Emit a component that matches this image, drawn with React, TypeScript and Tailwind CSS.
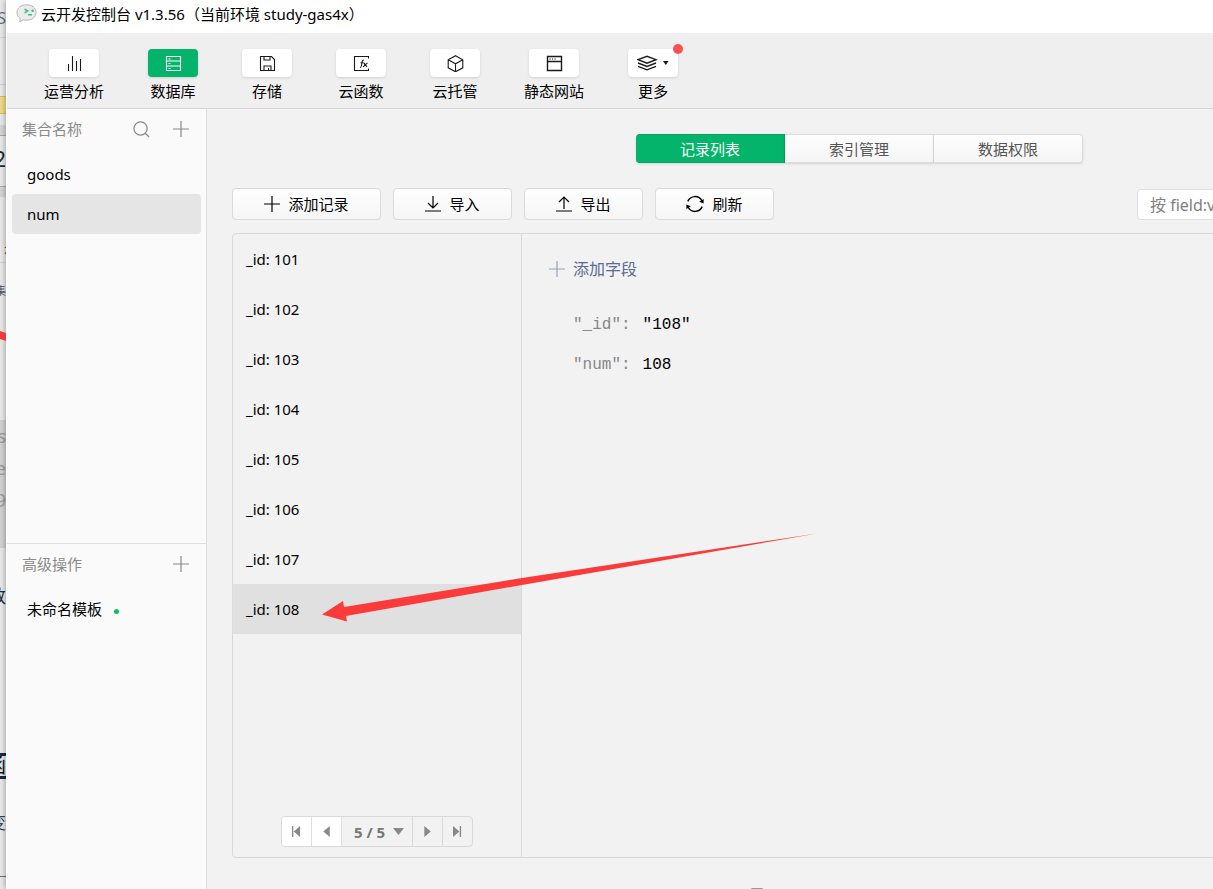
import { useState } from 'react';
import type { ReactNode } from 'react';

const PlusIcon = ({ className = '' }: { className?: string }) => (
    <svg className={className} width="16" height="16" viewBox="0 0 16 16" stroke="currentColor" strokeWidth="1.2" fill="none" aria-hidden="true">
        <path d="M8 0v16M0 8h16" />
    </svg>
);

const SearchIcon = () => (
    <svg width="17" height="17" viewBox="0 0 18 18" stroke="currentColor" strokeWidth="1.3" fill="none" aria-hidden="true">
        <circle cx="8" cy="8" r="7" />
        <path d="M13 13l4 4" />
    </svg>
);

const ImportIcon = () => (
    <svg width="16" height="16" viewBox="0 0 16 16" stroke="currentColor" strokeWidth="1.2" fill="none" aria-hidden="true">
        <path d="M8 0v12M3 7l5 5 5-5M0 15h16" />
    </svg>
);

const ExportIcon = () => (
    <svg width="16" height="16" viewBox="0 0 16 16" stroke="currentColor" strokeWidth="1.2" fill="none" aria-hidden="true">
        <path d="M8 13V1M3 6l5-5 5 5M0 15h16" />
    </svg>
);

const RefreshIcon = () => (
    <svg width="18" height="20" viewBox="1 0 18 20" stroke="currentColor" strokeWidth="1.5" fill="none" aria-hidden="true">
        <path d="M2.800 7.400A7.800 7.800 0 0 1 17 7" />
        <path d="M17.200 12.600A7.800 7.800 0 0 1 3 13" />
        <path d="M14.200 7.800L18.600 5v4.500z" fill="currentColor" stroke="none" />
        <path d="M5.800 12.200L1.400 15v-4.500z" fill="currentColor" stroke="none" />
    </svg>
);

const LogoIcon = () => (
    <svg width="21" height="19" viewBox="0 0 21 19" aria-hidden="true">
        <path
            d="M10.500 .8C5 .8 1 4 1 8.400c0 2.500 1.200 4.600 3.200 6L3.800 17.800l3.400-2c1 .3 2.200 .4 3.300 .4 5.500 0 9.500-3.300 9.500-7.800S16 .8 10.500 .8z"
            fill="#ececec"
            stroke="#b4b4b4"
        />
        <path d="M8.600 5.200l3 1.800-3 1.800M12 10.700h4" fill="none" stroke="#2fc27d" strokeWidth="1.500" />
        <circle cx="16.600" cy="6.800" r="1.300" fill="#2fc27d" />
    </svg>
);

const tools: { label: string; icon: ReactNode; badge?: boolean }[] = [
    {
        label: '运营分析',
        icon: <path d="M2.500 16V9M6.500 16V1M10.500 16V6M14.500 16V4" />,
    },
    {
        label: '数据库',
        icon: (
            <>
                <path d="M1.500 1.500h14v14h-14zM1.500 6h14M1.500 11h14" />
                <path d="M3.500 4h2M3.500 8.500h2M3.500 13.500h2" />
            </>
        ),
    },
    {
        label: '存储',
        icon: <path d="M1.500 1.500h11l3 3v11h-14zM5 1.500v3.500h6v-3.500M5 15.500V11h7v4.500M9.500 13v2.500" />,
    },
    {
        label: '云函数',
        icon: (
            <>
                <path d="M15.500 3.500v-2h-14v14h14v-2" />
                <path d="M7 12.500c1 0 1.300-.8 1.500-2L9.200 6.500c.2-1 .7-1.500 1.600-1.300M7.500 7.800h3M10.800 7.800l3.200 4M14.400 7.800l-4.200 4" />
            </>
        ),
    },
    {
        label: '云托管',
        icon: <path d="M8.500 .7l7.300 4.100v8L8.500 16.800l-7.300-4v-8zM1.200 4.800l7.300 4 7.300-4M8.500 8.800v8" />,
    },
    {
        label: '静态网站',
        icon: (
            <>
                <path d="M1.500 1.500h14v14h-14zM1.500 6.500h14" strokeWidth="1.400" />
                <path d="M3.500 4h1.200M6 4h1.200M8.500 4h1.200" />
            </>
        ),
    },
    { label: '更多', icon: null, badge: true },
];

const MoreIcon = () => (
    <svg width="32" height="16" viewBox="0 0 32 16" stroke="currentColor" strokeWidth="1.4" fill="none" aria-hidden="true">
        <path d="M1 4.700L10 1.300l9 3.400L10 8.200zM1 8l9 3.500L19 8M1 11.300l9 3.500 9-3.500" />
        <path d="M26 6h5.600l-2.800 4z" fill="currentColor" stroke="none" />
    </svg>
);

const records = [101, 102, 103, 104, 105, 106, 107, 108];
const tabs = ['记录列表', '索引管理', '数据权限'];
const collections = ['goods', 'num'];

const actions = [
    { label: '添加记录', icon: <PlusIcon />, width: 'w-[149px]' },
    { label: '导入', icon: <ImportIcon />, width: 'w-[119px]' },
    { label: '导出', icon: <ExportIcon />, width: 'w-[119px]' },
    { label: '刷新', icon: <RefreshIcon />, width: 'w-[119px]' },
];

// Slice of the page that shows behind the console window
const slices = [
    { cls: 'h-[37px] text-[16px] pt-2 text-gray-500 justify-end', text: 'S' },
    { cls: 'h-12 border-t border-b border-gray-300', text: '' },
    { cls: 'h-[11px]', text: '' },
    { cls: 'h-[18px] bg-[#f0d98a] border-y border-[#d9bd62]', text: '' },
    { cls: 'h-[11px]', text: '' },
    { cls: 'h-[11px] bg-[#d4d4d4] border-b border-[#aaa]', text: '' },
    { cls: 'h-[50px] text-[22px] pt-3 text-gray-800 justify-end', text: '2' },
    { cls: 'h-[11px] bg-[#d4d4d4] border-t border-[#aaa]', text: '' },
    { cls: 'h-[66px] text-[14px] pt-10 pl-1 text-[#7a4a35] border-b border-gray-300', text: '是' },
    { cls: 'h-[68px] text-[11px] pt-[18px] text-gray-600 justify-end', text: '集' },
    { cls: 'h-[10px] bg-[#ee3a3a] [clip-path:polygon(0_0,100%_20%,100%_100%,0_80%)]', text: '' },
    { cls: 'h-[79px]', text: '' },
    { cls: 'h-8 bg-[#d2d2d2] text-[18px] pt-1.5 text-[#9c9c9c] justify-end', text: 's' },
    { cls: 'h-8 bg-[#d2d2d2] text-[18px] pt-1.5 text-[#9c9c9c] justify-end', text: 'e' },
    { cls: 'h-16 bg-[#d2d2d2] text-[18px] pt-1.5 text-[#9c9c9c] justify-end', text: '9' },
    { cls: 'h-[205px] text-[18px] pt-[38px] text-gray-800 justify-end', text: '数' },
    { cls: 'h-[26px] border-y-3 border-gray-800 text-[20px] text-gray-900 justify-end', text: '函' },
    { cls: 'h-[98px] text-[17px] pt-[34px] text-gray-700 border-b border-gray-500 justify-end', text: '变' },
];

export default function App() {
    const [tool, setTool] = useState('数据库');
    const [tab, setTab] = useState('记录列表');
    const [collection, setCollection] = useState('num');
    const [record, setRecord] = useState(108);

    return (
        <div className="flex min-h-screen overflow-hidden bg-[#e9e9e9] font-['Noto_Sans','Noto_Sans_CJK_SC',sans-serif] text-[15px] leading-5 text-black">
            <div className="w-1.5 shrink-0 overflow-hidden" aria-hidden="true">
                {slices.map((s, i) => (
                    <div key={i} className={`flex overflow-hidden whitespace-nowrap ${s.cls}`}>
                        {s.text}
                    </div>
                ))}
            </div>

            <div className="flex min-w-0 flex-1 flex-col border-l border-white bg-[#f2f2f2] shadow-[0_0_6px_rgba(0,0,0,0.4)]">
                <header className="flex h-[33px] shrink-0 items-start gap-1 bg-white pl-[9px] pt-1">
                    <LogoIcon />
                    <h1 className="whitespace-nowrap">云开发控制台 v1.3.56（当前环境 study-gas4x）</h1>
                </header>

                <nav className="flex shrink-0 gap-11 border-b border-[#d6d6d6] bg-[#efefef] pb-[7px] pl-[37px] pt-4">
                    {tools.map((t) => (
                        <button key={t.label} type="button" onClick={() => setTool(t.label)} className="flex flex-col items-center gap-1 whitespace-nowrap">
                            <span
                                className={`relative flex h-7 w-[50px] items-center justify-center rounded shadow-sm ${tool === t.label
                                    ? 'bg-[#04b46b] text-white'
                                    : 'bg-white text-[#1a1a1a]'
                                    }`}
                            >
                                {t.icon ? (
                                    <svg width="17" height="17" viewBox="0 0 17 17" stroke="currentColor" strokeWidth="1.1" fill="none" aria-hidden="true">
                                        {t.icon}
                                    </svg>
                                ) : (
                                    <MoreIcon />
                                )}
                                {t.badge && <span className="absolute -right-[5px] -top-[5px] h-2.5 w-2.5 rounded-full bg-[#fa5151]" />}
                            </span>
                            <span>{t.label}</span>
                        </button>
                    ))}
                </nav>

                <div className="flex min-h-0 flex-1">
                    <aside className="flex w-[200px] shrink-0 flex-col border-r border-[#dedede] bg-[#fafafa]">
                        <section className="flex-1">
                            <div className="flex h-10 items-center pl-[15px] pr-[17px] text-[#8a8a8a]">
                                <h2 className="flex-1">集合名称</h2>
                                <button type="button" aria-label="搜索" className="mr-[23px]">
                                    <SearchIcon />
                                </button>
                                <button type="button" aria-label="添加集合">
                                    <PlusIcon />
                                </button>
                            </div>
                            <ul className="mt-[5px] px-[5px]">
                                {collections.map((name) => (
                                    <li key={name}>
                                        <button
                                            type="button"
                                            onClick={() => setCollection(name)}
                                            className={`h-10 w-full rounded-sm px-[15px] text-left ${collection === name ? 'bg-[#e5e5e5]' : ''}`}
                                        >
                                            {name}
                                        </button>
                                    </li>
                                ))}
                            </ul>
                        </section>

                        <section className="h-[346px] shrink-0 border-t border-[#dedede]">
                            <div className="flex h-10 items-center pl-[15px] pr-[17px] text-[#8a8a8a]">
                                <h2 className="flex-1">高级操作</h2>
                                <button type="button" aria-label="添加模板">
                                    <PlusIcon />
                                </button>
                            </div>
                            <button type="button" className="mt-[5px] flex h-10 w-full items-center gap-3 px-5">
                                未命名模板
                                <span className="mt-1 h-[5px] w-[5px] rounded-full bg-[#07c160]" />
                            </button>
                        </section>
                    </aside>

                    <main className="min-w-0 flex-1 overflow-hidden">
                        <div className="flex h-full min-w-[1305px] flex-col px-[25px] pt-[25px]">
                            <div className="flex justify-center text-[#555]">
                                {tabs.map((name) => (
                                    <button
                                        key={name}
                                        type="button"
                                        onClick={() => setTab(name)}
                                        className={`h-[29px] w-[149px] border-y border-r shadow-sm first:rounded-l last:rounded-r ${tab === name
                                            ? 'border-[#05a562] bg-[#04b46b] text-white'
                                            : 'border-[#dcdcdc] bg-linear-to-b from-[#fdfdfd] to-[#f5f5f5]'
                                            }`}
                                    >
                                        {name}
                                    </button>
                                ))}
                            </div>

                            <div className="mt-[25px] flex items-end gap-3">
                                {actions.map((a) => (
                                    <button
                                        key={a.label}
                                        type="button"
                                        className={`flex h-8 items-center justify-center gap-2 rounded border border-[#dadada] bg-linear-to-b from-white to-[#f5f5f5] ${a.width}`}
                                    >
                                        {a.icon}
                                        {a.label}
                                    </button>
                                ))}
                                <input
                                    type="text"
                                    aria-label="查询条件"
                                    placeholder="按 field:value 查询"
                                    className="ml-auto h-[31px] w-[350px] rounded border border-[#e0e0e0] bg-white px-3 text-[16px] placeholder:text-[#7f7f7f]"
                                />
                            </div>

                            <div className="relative mt-[13px] flex flex-1 rounded border border-[#d9d9d9]">
                                <div className="flex w-[289px] shrink-0 flex-col border-r border-[#d9d9d9]">
                                    <ul className="flex-1">
                                        {records.map((id) => (
                                            <li key={id}>
                                                <button
                                                    type="button"
                                                    onClick={() => setRecord(id)}
                                                    className={`h-[50px] w-full px-[13px] text-left ${record === id ? 'bg-[#e0e0e0]' : ''}`}
                                                >
                                                    _id: {id}
                                                </button>
                                            </li>
                                        ))}
                                    </ul>
                                    <div className="mb-[10px] flex h-[31px] w-48 self-center overflow-hidden rounded border border-[#d9d9d9] text-[#888]">
                                        <button type="button" aria-label="第一页" className="flex w-[30px] items-center justify-center border-r border-[#dedede] bg-white">
                                            <svg width="9" height="11" viewBox="0 0 10 12" fill="currentColor"><path d="M0 0h1.500v12H0zM9 0v12L2 6z" /></svg>
                                        </button>
                                        <button type="button" aria-label="上一页" className="flex w-[30px] items-center justify-center border-r border-[#dedede] bg-white">
                                            <svg width="8" height="11" viewBox="0 0 8 12" fill="currentColor"><path d="M7 0v12L0 6z" /></svg>
                                        </button>
                                        <div className="relative flex-1">
                                            <select aria-label="页码" className="h-full w-full appearance-none bg-transparent pl-3 font-bold text-[#777]">
                                                <option>5 / 5</option>
                                            </select>
                                            <svg className="pointer-events-none absolute right-2 top-[11px]" width="11" height="8" viewBox="0 0 11 8" fill="currentColor"><path d="M0 0h11L5.500 7z" /></svg>
                                        </div>
                                        <button type="button" aria-label="下一页" className="flex w-[30px] items-center justify-center border-l border-[#d9d9d9]">
                                            <svg width="8" height="11" viewBox="0 0 8 12" fill="currentColor"><path d="M0 0v12l7-6z" /></svg>
                                        </button>
                                        <button type="button" aria-label="最后一页" className="flex w-[30px] items-center justify-center border-l border-[#d9d9d9]">
                                            <svg width="9" height="11" viewBox="0 0 10 12" fill="currentColor"><path d="M7.500 0H9v12H7.500zM0 0v12l7-6z" /></svg>
                                        </button>
                                    </div>
                                </div>

                                <div className="flex-1 pl-[27px] pt-[25px] text-[16px]">
                                    <button type="button" className="flex h-5 items-center gap-2 text-[#576b95]">
                                        <PlusIcon className="opacity-60" />
                                        添加字段
                                    </button>
                                    <dl className="ml-6 mt-[26px] font-['Liberation_Mono',monospace] leading-10">
                                        <div className="flex gap-3">
                                            <dt className="text-[#888]">"_id":</dt>
                                            <dd>"{record}"</dd>
                                        </div>
                                        <div className="flex gap-3">
                                            <dt className="text-[#888]">"num":</dt>
                                            <dd>{record}</dd>
                                        </div>
                                    </dl>
                                </div>

                                {/* Arrow pointing at the last record */}
                                <svg className="pointer-events-none absolute left-[89px] top-[299px]" width="496" height="90" viewBox="0 0 496 90" fill="#fb3a3a" aria-hidden="true">
                                    <path d="M0 81.500L21 68L22 74L200 45L495 0.500L200 52L24 83L25 88.500Z" />
                                </svg>
                            </div>

                            <footer className="flex h-[31px] shrink-0 items-end pl-[519px]">
                                <span className="h-px w-3 rounded-t-sm bg-[#999]" />
                            </footer>
                        </div>
                    </main>
                </div>
            </div>
        </div>
    );
}
